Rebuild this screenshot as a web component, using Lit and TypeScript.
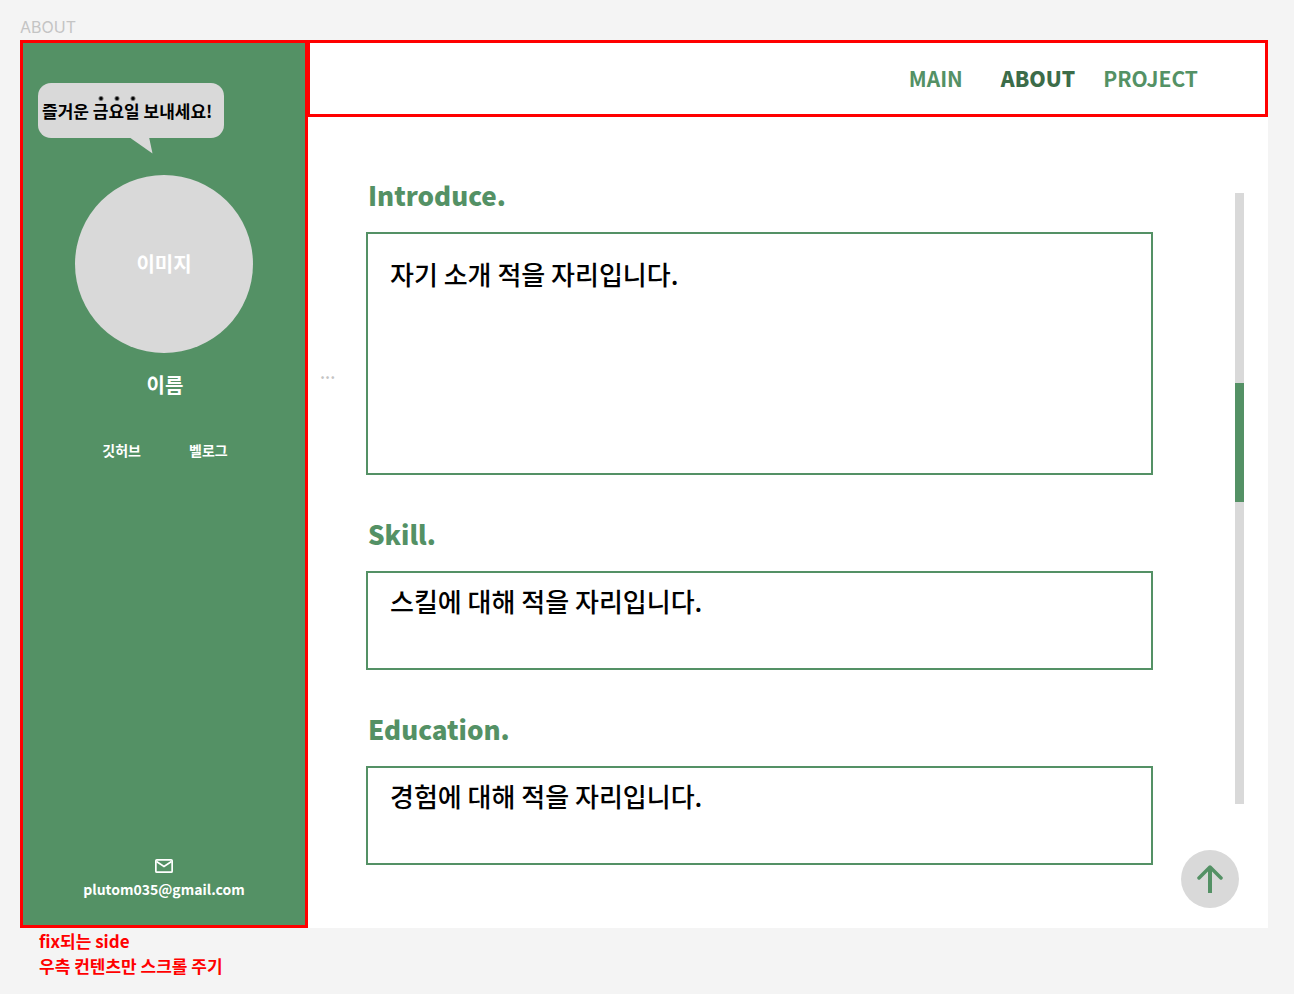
import { LitElement, html, css } from "lit";
import { customElement } from "lit/decorators.js";

interface Section {
  id: string;
  title: string;
  text: string;
  size: string;
}

const SECTIONS: Section[] = [
  { id: "introduce", title: "Introduce.", text: "자기 소개 적을 자리입니다.", size: "tall" },
  { id: "skill", title: "Skill.", text: "스킬에 대해 적을 자리입니다.", size: "short" },
  { id: "education", title: "Education.", text: "경험에 대해 적을 자리입니다.", size: "short" },
];

@customElement("side-profile")
export class SideProfile extends LitElement {
  static styles = css`
    :host {
      display: flex;
      flex-direction: column;
      align-items: center;
      box-sizing: border-box;
      padding: 40px 15px 24px;
      border: 3px solid #ff0000;
      background: #549165;
      color: #ffffff;
      font-weight: 700;
    }
    a {
      color: inherit;
      text-decoration: none;
    }
    .bubble {
      position: relative;
      align-self: flex-start;
      box-sizing: border-box;
      width: 186px;
      height: 55px;
      padding: 13px 4px;
      border-radius: 13px;
      background: #d9d9d9;
      color: #000000;
      font-size: 17px;
      line-height: 30px;
      font-weight: 700;
      white-space: nowrap;
    }
    .bubble em {
      display: inline-block;
      font-style: normal;
      background: radial-gradient(circle, #000000 1px, transparent 3px) 0 0 / 16px 5px repeat-x;
    }
    .tail {
      position: absolute;
      left: 91px;
      top: 54px;
      width: 24px;
      height: 17px;
      fill: #d9d9d9;
    }
    .avatar {
      display: grid;
      place-items: center;
      width: 178px;
      height: 178px;
      margin-top: 37px;
      border-radius: 50%;
      background: #d9d9d9;
      font-size: 20px;
      line-height: 30px;
    }
    .name {
      margin: 17px 0 0;
      padding-left: 2px;
      font-size: 20px;
      line-height: 30px;
      font-weight: 700;
    }
    .links {
      display: flex;
      gap: 48px;
      margin-top: 40px;
      padding-left: 2px;
      font-size: 14px;
      line-height: 20px;
    }
    .mail {
      display: flex;
      flex-direction: column;
      align-items: center;
      gap: 4px;
      margin-top: auto;
      font-size: 14px;
      line-height: 24px;
    }
    .mail svg {
      width: 18px;
      height: 14px;
    }
  `;

  render() {
    return html`
      <div class="bubble">
        즐거운 <em>금요일</em> 보내세요!
        <svg class="tail" viewBox="0 0 24 17" aria-hidden="true"><path d="M0 0H20L23.500 16.500Z" /></svg>
      </div>
      <div class="avatar">이미지</div>
      <h1 class="name">이름</h1>
      <nav class="links" aria-label="외부 링크">
        <a href="#github">깃허브</a>
        <a href="#velog">벨로그</a>
      </nav>
      <a class="mail" href="mailto:plutom035@gmail.com">
        <svg viewBox="0 0 18 14" fill="none" stroke="#fff" stroke-width="1.700" aria-hidden="true">
          <rect x="0.850" y="0.850" width="16.300" height="12.300" rx="1" />
          <path d="M1.500 2.500 9 7.500l7.500-5" />
        </svg>
        plutom035@gmail.com
      </a>
    `;
  }
}

@customElement("top-nav")
export class TopNav extends LitElement {
  static styles = css`
    :host {
      display: block;
      box-sizing: border-box;
      height: 77px;
      padding: 19px 67px 0 0;
      border: 3px solid #ff0000;
    }
    .nav {
      display: flex;
      justify-content: flex-end;
      font-size: 21px;
      line-height: 32px;
      font-weight: 700;
    }
    a {
      color: #549165;
      text-decoration: none;
    }
    .main {
      margin-right: 38px;
    }
    .current {
      margin-right: 28px;
      color: #3c6c49;
      font-weight: 900;
    }
  `;

  render() {
    return html`
      <nav class="nav">
        <a class="main" href="#main">MAIN</a>
        <a class="current" href="#about" aria-current="page">ABOUT</a>
        <a href="#project">PROJECT</a>
      </nav>
    `;
  }
}

@customElement("app-root")
export class AppRoot extends LitElement {
  static styles = css`
    :host {
      display: flex;
      flex-direction: column;
      box-sizing: border-box;
      min-height: 100vh;
      padding: 0 26px 0 20px;
      background: #f4f4f4;
      font-family: "Noto Sans CJK KR", sans-serif;
    }
    .label {
      padding: 15px 0 1px;
      color: #c4c4c4;
      font-family: Inter, sans-serif;
      font-size: 16px;
      line-height: 24px;
    }
    .frame {
      flex: 1;
      display: grid;
      grid-template-columns: 288px minmax(0, 1fr);
      grid-template-rows: auto 1fr;
      background: #ffffff;
    }
    .side {
      grid-row: 1 / 3;
    }
    .top {
      margin-left: -1px;
    }
    .body {
      display: flex;
    }
    .more {
      flex: none;
      box-sizing: border-box;
      width: 58px;
      padding: 245px 0 0 12px;
      color: #c4c4c4;
      font-size: 17px;
      line-height: 20px;
      font-weight: 500;
    }
    .content {
      flex: 1;
      padding-top: 58px;
    }
    h2 {
      margin: 0;
      padding-left: 2px;
      color: #549165;
      font-size: 26px;
      line-height: 40px;
      font-weight: 900;
    }
    .box {
      box-sizing: border-box;
      margin: 17px 0 39px;
      border: 2px solid #549165;
      font-size: 26px;
      line-height: 38px;
      font-weight: 500;
    }
    .box p {
      margin: 0;
    }
    .tall {
      min-height: 243px;
      padding: 21px 22px;
    }
    .short {
      min-height: 99px;
      padding: 9px 22px;
    }
    .rail {
      flex: none;
      display: flex;
      flex-direction: column;
      width: 63px;
      margin: 76px 24px 20px 28px;
    }
    .track {
      flex: 1;
      align-self: flex-end;
      display: flex;
      flex-direction: column;
      width: 9px;
      background: #d9d9d9;
    }
    .before {
      flex: 190;
    }
    .thumb {
      flex: 119;
      background: #549165;
    }
    .after {
      flex: 302;
    }
    .up {
      display: grid;
      place-items: center;
      width: 58px;
      height: 58px;
      margin-top: 46px;
      padding: 0;
      border: 0;
      border-radius: 50%;
      background: #d9d9d9;
      cursor: pointer;
    }
    .up svg {
      width: 26px;
      height: 28px;
    }
    .notes {
      padding: 0 19px 16px;
      color: #ff0000;
      font-size: 17px;
      line-height: 25px;
      font-weight: 700;
    }
    .notes p {
      margin: 0;
    }
  `;

  private toTop() {
    window.scrollTo({ top: 0, behavior: "smooth" });
  }

  render() {
    return html`
      <div class="label">ABOUT</div>
      <div class="frame">
        <side-profile class="side"></side-profile>
        <top-nav class="top"></top-nav>
        <main class="body">
          <div class="more">...</div>
          <div class="content">
            ${SECTIONS.map(
              (s) => html`
                <section aria-labelledby=${s.id}>
                  <h2 id=${s.id}>${s.title}</h2>
                  <div class="box ${s.size}"><p>${s.text}</p></div>
                </section>
              `
            )}
          </div>
          <div class="rail">
            <div class="track">
              <div class="before"></div>
              <div class="thumb"></div>
              <div class="after"></div>
            </div>
            <button class="up" type="button" aria-label="맨 위로" @click=${this.toTop}>
              <svg viewBox="0 0 26 28" fill="none" stroke="#549165" stroke-width="4" aria-hidden="true">
                <path d="M13 28V3" />
                <path d="M2 13 13 2l11 11" stroke-width="3.500" stroke-linecap="round" stroke-linejoin="round" />
              </svg>
            </button>
          </div>
        </main>
      </div>
      <div class="notes">
        <p>fix되는 side</p>
        <p>우측 컨텐츠만 스크롤 주기</p>
      </div>
    `;
  }
}
